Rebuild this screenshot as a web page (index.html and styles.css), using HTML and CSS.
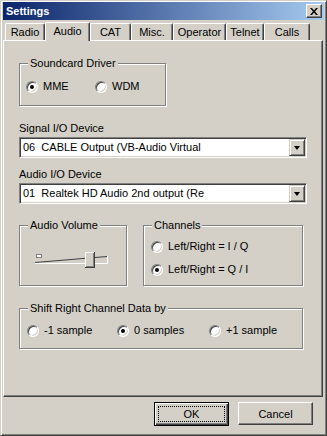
FILE: index.html
```html
<!DOCTYPE html>
<html lang="en">
<head>
  <meta charset="UTF-8">
  <meta name="viewport" content="width=device-width, initial-scale=1.0">
  <title>Settings</title>
  <link rel="stylesheet" href="styles.css">
</head>
<body>

  <div class="window">
    <div class="titlebar">
      <span class="title">Settings</span>
      <span class="close">
        <svg width="8" height="7" viewBox="0 0 8 7">
          <path d="M0 0h2l2 2.5L6 0h2L5 3.5 8 7H6L4 4.5 2 7H0l3-3.5z" fill="#000"/>
        </svg>
      </span>
    </div>

    <!-- Onglets -->
    <div class="tabs">
      <div class="tab tab-radio">Radio</div>
      <div class="tab tab-audio active">Audio</div>
      <div class="tab tab-cat">CAT</div>
      <div class="tab tab-misc">Misc.</div>
      <div class="tab tab-operator">Operator</div>
      <div class="tab tab-telnet">Telnet</div>
      <div class="tab tab-calls">Calls</div>
    </div>

    <div class="panel">
      <div class="group group-driver">
        <span class="group-title">Soundcard Driver</span>
        <div class="options options-driver">
          <span class="opt opt-mme"><span class="dot on"></span>MME</span>
          <span class="opt"><span class="dot"></span>WDM</span>
        </div>
      </div>

      <div class="field-label">Signal I/O Device</div>
      <div class="combo">
        <span class="combo-text">06  CABLE Output (VB-Audio Virtual</span>
        <span class="combo-btn"><span class="arrow"></span></span>
      </div>

      <div class="field-label second">Audio I/O Device</div>
      <div class="combo">
        <span class="combo-text">01  Realtek HD Audio 2nd output (Re</span>
        <span class="combo-btn"><span class="arrow"></span></span>
      </div>

      <div class="row">
        <div class="group group-volume">
          <span class="group-title">Audio Volume</span>
          <svg class="slider" width="80" height="20" viewBox="0 0 80 20">
            <rect x="3.5" y="5.5" width="5" height="3" fill="#fff" stroke="#808080"/>
            <line x1="2" y1="13.5" x2="74" y2="7.5" stroke="#404040"/>
            <line x1="2" y1="14.5" x2="75" y2="14.5" stroke="#fff"/>
            <line x1="74.5" y1="7" x2="74.5" y2="15" stroke="#fff"/>
            <rect x="52" y="3" width="10" height="16" fill="#404040"/>
            <rect x="52" y="3" width="9" height="15" fill="#fff"/>
            <rect x="53" y="4" width="8" height="14" fill="#808080"/>
            <rect x="53" y="4" width="7" height="13" fill="#d4d0c8"/>
          </svg>
        </div>
        <div class="group group-channels">
          <span class="group-title">Channels</span>
          <div class="options options-channels">
            <span class="opt"><span class="dot"></span>Left/Right = I / Q</span>
            <span class="opt"><span class="dot on"></span>Left/Right = Q / I</span>
          </div>
        </div>
      </div>

      <div class="group group-shift">
        <span class="group-title">Shift Right Channel Data by</span>
        <div class="options options-shift">
          <span class="opt opt-minus"><span class="dot"></span>-1 sample</span>
          <span class="opt opt-zero"><span class="dot on"></span>0 samples</span>
          <span class="opt"><span class="dot"></span>+1 sample</span>
        </div>
      </div>
    </div>

    <div class="buttons">
      <button class="btn default"><span class="focus">OK</span></button>
      <button class="btn">Cancel</button>
    </div>
  </div>

</body>
</html>
```

FILE: styles.css
```css
body {
  margin: 0;
  font-family: "Liberation Sans", Arial, sans-serif;
  font-size: 11px;
  color: #000;
  background: #d4d0c8;
}
.window {
  width: 327px;
  height: 436px;
  box-sizing: border-box;
  display: flex;
  flex-direction: column;
  padding: 1px 2px;
  border: 1px solid;
  border-color: #d4d0c8 #404040 #404040 #d4d0c8;
  box-shadow: inset 1px 1px 0 #fff, inset -1px -1px 0 #808080;
  background: #d4d0c8;
}
.titlebar {
  height: 18px;
  display: flex;
  align-items: center;
  justify-content: space-between;
  padding: 0 2px 0 2px;
  background: linear-gradient(to right, #0a246a, #a6caf0);
}
.title {
  color: #fff;
  font-weight: bold;
  font-size: 11px;
  padding-left: 1px;
}
.close {
  width: 16px;
  height: 14px;
  box-sizing: border-box;
  display: flex;
  align-items: center;
  justify-content: center;
  border: 1px solid;
  border-color: #fff #404040 #404040 #fff;
  box-shadow: inset -1px -1px 0 #808080;
  background: #d4d0c8;
}

/* onglets */
.tabs {
  height: 20px;
  display: flex;
  padding-left: 2px;
  position: relative;
  z-index: 1;
}
.tab {
  height: 17px;
  margin-top: 3px;
  box-sizing: border-box;
  display: flex;
  align-items: center;
  justify-content: center;
  border: 1px solid;
  border-bottom: none;
  border-color: #fff #404040 #404040 #fff;
  border-radius: 2px 2px 0 0;
  box-shadow: inset -1px 0 0 #808080;
  background: #d4d0c8;
}
.tab.active {
  height: 19px;
  margin-top: 2px;
  padding-bottom: 2px;
}
.tab-radio { width: 40px; }
.tab-audio { width: 45px; }
.tab-cat { width: 41px; }
.tab-misc { width: 42px; }
.tab-operator { width: 53px; }
.tab-telnet { width: 38px; }
.tab-calls { width: 46px; }

.panel {
  flex: 1;
  margin-right: 1px;
  padding: 22px 0 0 15px;
  display: flex;
  flex-direction: column;
  align-items: flex-start;
  border: 1px solid;
  border-color: #fff #404040 #404040 #fff;
  box-shadow: inset -1px -1px 0 #808080;
}

/* cadres */
.group {
  box-sizing: border-box;
  display: flex;
  flex-direction: column;
  align-items: flex-start;
  border: 1px solid #808080;
  box-shadow: 1px 1px 0 #fff, inset 1px 1px 0 #fff;
}
.group-title {
  margin: -7px 0 0 8px;
  padding: 0 2px;
  line-height: 13px;
  background: #d4d0c8;
}
.group-driver { width: 147px; height: 43px; }
.group-volume { width: 108px; height: 61px; }
.group-channels { width: 160px; height: 61px; margin-left: 16px; }
.group-shift { width: 284px; height: 41px; margin-top: 22px; }

.options {
  display: flex;
  line-height: 13px;
}
.options-driver { margin: 10px 0 0 6px; }
.options-channels {
  flex-direction: column;
  gap: 10px;
  margin: 8px 0 0 7px;
}
.options-shift { margin: 9px 0 0 7px; }
.opt {
  display: flex;
  align-items: center;
  gap: 5px;
}
.opt-mme { width: 69px; }
.opt-minus { width: 90px; }
.opt-zero { width: 92px; }

.dot {
  width: 12px;
  height: 12px;
  box-sizing: border-box;
  position: relative;
  border-radius: 50%;
  border: 1px solid;
  border-color: #808080 #fff #fff #808080;
  box-shadow: inset 1px 1px 0 #404040, inset -1px -1px 0 #d4d0c8;
  background: #fff;
}
.dot.on::after {
  content: '';
  position: absolute;
  left: 3px;
  top: 3px;
  width: 4px;
  height: 4px;
  border-radius: 50%;
  background: #000;
}

.slider {
  margin: 17px 0 0 13px;
}

/* listes deroulantes */
.field-label {
  margin-top: 16px;
  line-height: 13px;
}
.field-label.second {
  margin-top: 10px;
}
.combo {
  width: 288px;
  height: 21px;
  box-sizing: border-box;
  margin-top: 2px;
  padding: 1px;
  display: flex;
  border: 1px solid;
  border-color: #808080 #fff #fff #808080;
  box-shadow: inset 1px 1px 0 #404040, inset -1px -1px 0 #d4d0c8;
  background: #fff;
}
.combo-text {
  flex: 1;
  padding-left: 2px;
  line-height: 17px;
  white-space: pre;
}
.combo-btn {
  width: 16px;
  height: 17px;
  box-sizing: border-box;
  display: flex;
  align-items: center;
  justify-content: center;
  border: 1px solid;
  border-color: #d4d0c8 #404040 #404040 #d4d0c8;
  box-shadow: inset 1px 1px 0 #fff, inset -1px -1px 0 #808080;
  background: #d4d0c8;
}
.arrow {
  width: 0;
  height: 0;
  border-left: 3.5px solid transparent;
  border-right: 3.5px solid transparent;
  border-top: 4px solid #000;
}

.row {
  display: flex;
  margin-top: 21px;
}

/* boutons */
.buttons {
  height: 37px;
  box-sizing: border-box;
  display: flex;
  justify-content: flex-end;
  align-items: flex-start;
  gap: 9px;
  padding: 5px 11px 0 0;
}
.btn {
  width: 75px;
  height: 23px;
  box-sizing: border-box;
  padding: 0;
  font: inherit;
  color: #000;
  border: 1px solid;
  border-color: #fff #404040 #404040 #fff;
  box-shadow: inset -1px -1px 0 #808080;
  background: #d4d0c8;
}
.btn.default {
  height: 24px;
  padding: 3px;
  border: 1px solid #000;
  box-shadow: inset 1px 1px 0 #fff, inset -1px -1px 0 #404040, inset -2px -2px 0 #808080;
}
.focus {
  display: flex;
  align-items: center;
  justify-content: center;
  height: 100%;
  box-sizing: border-box;
  border: 1px dotted #000;
}
```
